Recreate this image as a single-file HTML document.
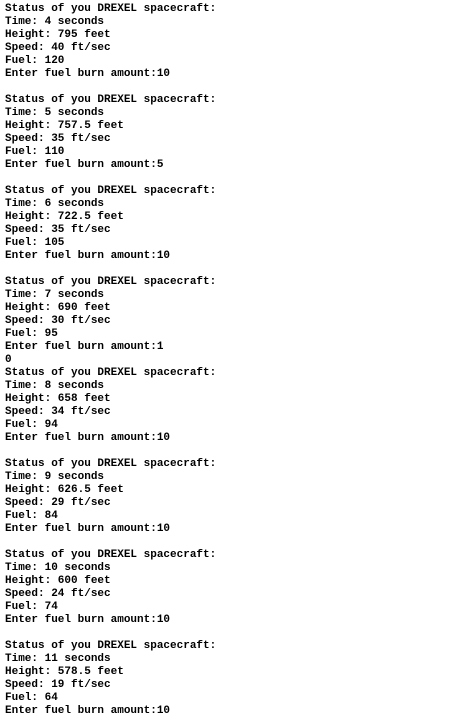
<!DOCTYPE html>
<html><head><style>
html,body{margin:0;padding:0;background:#fff;width:458px;height:722px;overflow:hidden}
pre{margin:0;padding:3px 0 0 5px;font-family:"Liberation Mono",monospace;font-weight:bold;font-size:11px;line-height:13px;color:#000}
</style></head><body><pre>Status of you DREXEL spacecraft:
Time: 4 seconds
Height: 795 feet
Speed: 40 ft/sec
Fuel: 120
Enter fuel burn amount:10

Status of you DREXEL spacecraft:
Time: 5 seconds
Height: 757.5 feet
Speed: 35 ft/sec
Fuel: 110
Enter fuel burn amount:5

Status of you DREXEL spacecraft:
Time: 6 seconds
Height: 722.5 feet
Speed: 35 ft/sec
Fuel: 105
Enter fuel burn amount:10

Status of you DREXEL spacecraft:
Time: 7 seconds
Height: 690 feet
Speed: 30 ft/sec
Fuel: 95
Enter fuel burn amount:1
0
Status of you DREXEL spacecraft:
Time: 8 seconds
Height: 658 feet
Speed: 34 ft/sec
Fuel: 94
Enter fuel burn amount:10

Status of you DREXEL spacecraft:
Time: 9 seconds
Height: 626.5 feet
Speed: 29 ft/sec
Fuel: 84
Enter fuel burn amount:10

Status of you DREXEL spacecraft:
Time: 10 seconds
Height: 600 feet
Speed: 24 ft/sec
Fuel: 74
Enter fuel burn amount:10

Status of you DREXEL spacecraft:
Time: 11 seconds
Height: 578.5 feet
Speed: 19 ft/sec
Fuel: 64
Enter fuel burn amount:10</pre></body></html>
